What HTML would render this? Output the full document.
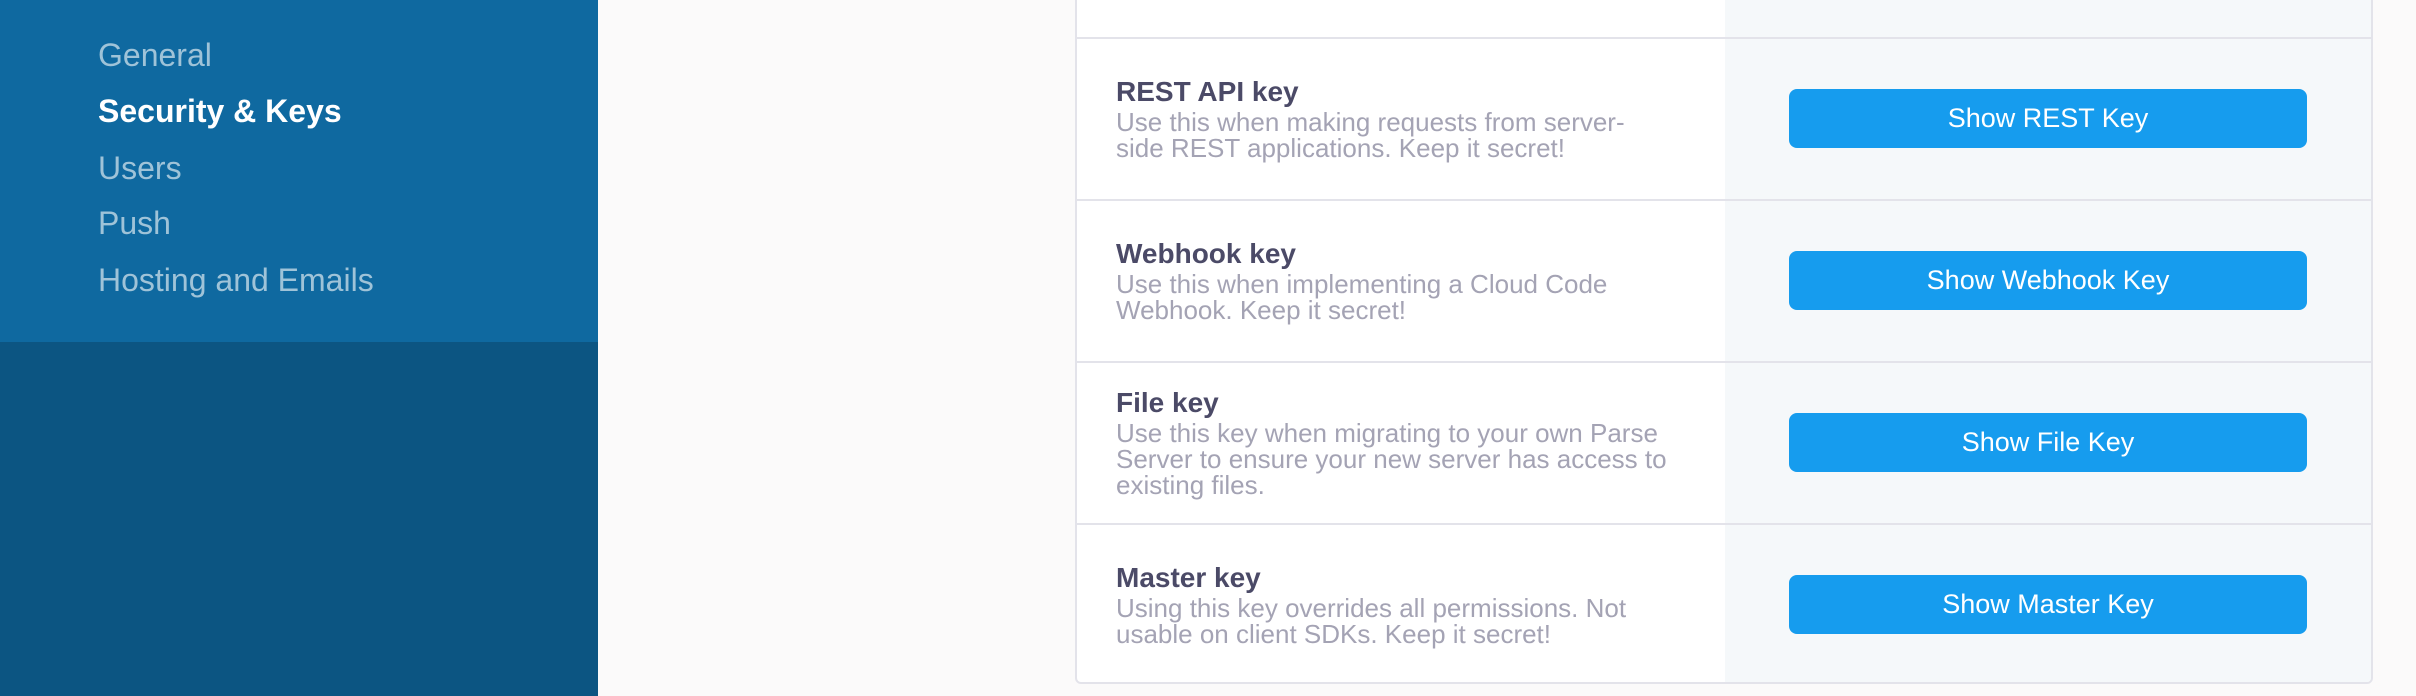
<!DOCTYPE html>
<html><head><meta charset="utf-8"><style>
*{margin:0;padding:0;box-sizing:border-box}
body{width:2416px;height:696px;overflow:hidden;background:#fbfafa;font-family:"Liberation Sans",sans-serif;position:relative}
.side{position:absolute;left:0;top:0;width:598px;height:696px;background:#0c5582}
.side .top{position:absolute;left:0;top:0;width:598px;height:342px;background:#0f69a0}
.nav{position:absolute;left:98px;font-size:32px;color:#9fc3d8;line-height:36px}
.nav.b{color:#fff;font-weight:bold}
.card{position:absolute;left:1075px;top:-10px;width:1298px;height:694px;background:#fff;border:2px solid #e3e3ea;border-radius:6px;overflow:hidden}
.rc{position:absolute;left:648px;top:0;right:0;bottom:0;background:#f5f8fa}
.row{position:absolute;left:0;right:0;height:162px;border-top:2px solid #e3e3ea}
.txt{position:absolute;left:39px;top:0;bottom:0;width:620px;display:flex;flex-direction:column;justify-content:center}
.t{font-size:28px;font-weight:bold;color:#4b4a67;line-height:30px;margin-bottom:2px}
.d{font-size:26px;color:#a4a3b4;line-height:26px;white-space:nowrap}
.btn{position:absolute;left:712px;width:518px;height:59px;top:50px;background:#169cee;border-radius:8px;color:#fff;font-size:27px;display:flex;align-items:center;justify-content:center}
</style></head><body>
<div class="side"><div class="top"></div>
<div class="nav" style="top:37px">General</div>
<div class="nav b" style="top:93px">Security &amp; Keys</div>
<div class="nav" style="top:150px">Users</div>
<div class="nav" style="top:205px">Push</div>
<div class="nav" style="top:262px">Hosting and Emails</div>
</div>
<div class="card"><div class="rc"></div>
<div class="row" style="top:45px"><div class="txt"><div class="t">REST API key</div><div class="d">Use this when making requests from server-<br>side REST applications. Keep it secret!</div></div><div class="btn">Show REST Key</div></div>
<div class="row" style="top:207px"><div class="txt"><div class="t">Webhook key</div><div class="d">Use this when implementing a Cloud Code<br>Webhook. Keep it secret!</div></div><div class="btn">Show Webhook Key</div></div>
<div class="row" style="top:369px"><div class="txt"><div class="t">File key</div><div class="d">Use this key when migrating to your own Parse<br>Server to ensure your new server has access to<br>existing files.</div></div><div class="btn">Show File Key</div></div>
<div class="row" style="top:531px"><div class="txt"><div class="t">Master key</div><div class="d">Using this key overrides all permissions. Not<br>usable on client SDKs. Keep it secret!</div></div><div class="btn">Show Master Key</div></div>
</div>
</body></html>
